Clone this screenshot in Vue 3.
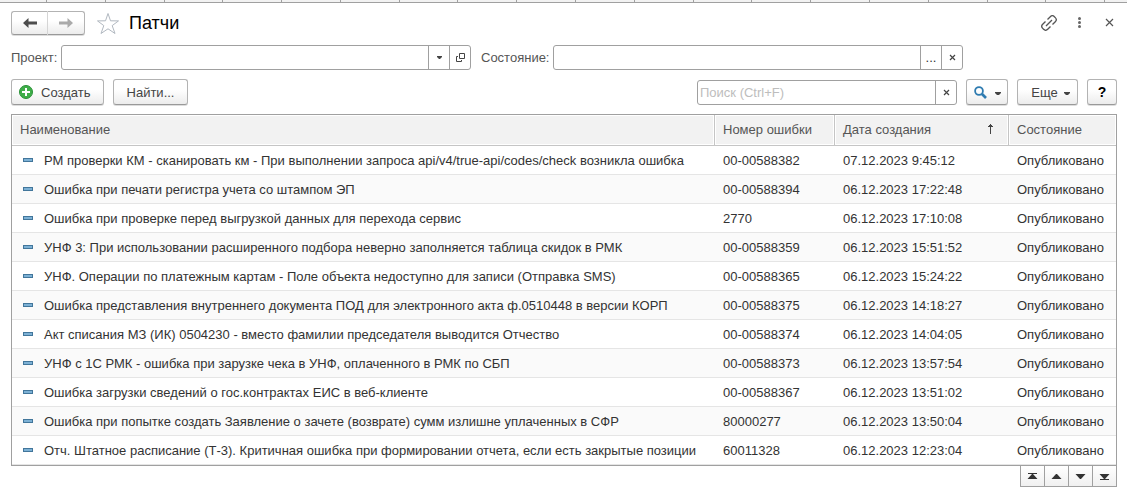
<script setup>
import { ref } from 'vue'

const project = ref('')
const state = ref('')
const query = ref('')
const rows = [
  ['РМ проверки КМ - сканировать км - При выполнении запроса api/v4/true-api/codes/check возникла ошибка', '00-00588382', '07.12.2023 9:45:12'],
  ['Ошибка при печати регистра учета со штампом ЭП', '00-00588394', '06.12.2023 17:22:48'],
  ['Ошибка при проверке перед выгрузкой данных для перехода сервис', '2770', '06.12.2023 17:10:08'],
  ['УНФ 3: При использовании расширенного подбора неверно заполняется таблица скидок в РМК', '00-00588359', '06.12.2023 15:51:52'],
  ['УНФ. Операции по платежным картам - Поле объекта недоступно для записи (Отправка SMS)', '00-00588365', '06.12.2023 15:24:22'],
  ['Ошибка представления внутреннего документа ПОД для электронного акта ф.0510448 в версии КОРП', '00-00588375', '06.12.2023 14:18:27'],
  ['Акт списания МЗ (ИК) 0504230 - вместо фамилии председателя выводится Отчество', '00-00588374', '06.12.2023 14:04:05'],
  ['УНФ с 1С РМК - ошибка при зарузке чека в УНФ, оплаченного в РМК по СБП', '00-00588373', '06.12.2023 13:57:54'],
  ['Ошибка загрузки сведений о гос.контрактах ЕИС в веб-клиенте', '00-00588367', '06.12.2023 13:51:02'],
  ['Ошибка при попытке создать Заявление о зачете (возврате) сумм излишне уплаченных в СФР', '80000277', '06.12.2023 13:50:04'],
  ['Отч. Штатное расписание (Т-3). Критичная ошибка при формировании отчета, если есть закрытые позиции', '60011328', '06.12.2023 12:23:04'],
]
const pager = [
  { label: 'В начало', d: 'M4 5h9v1H4zM8 6h1L13.500 11h-10z' },
  { label: 'Вверх', d: 'M8 6h1L13.500 11h-10z' },
  { label: 'Вниз', d: 'M3.500 6h10L9 11H8z' },
  { label: 'В конец', d: 'M3.500 6h10L9 11H8zM4 11h9v1H4z' },
]
</script>

<template>
  <div class="page">
    <div class="tabs"><i class="first"></i><i v-for="n in 18" :key="n"></i><i class="last"></i></div>
    <main>
      <header class="titlebar">
        <div class="nav">
          <button class="btn" aria-label="Назад">
            <svg width="14" height="10" viewBox="0 0 14 10"><path d="M0 5L5.500 0v3.500H14v3H5.500V10z" fill="#4d4d4d" /></svg>
          </button>
          <button class="btn" aria-label="Вперед">
            <svg width="14" height="10" viewBox="0 0 14 10"><path d="M14 5L8.500 0v3.500H0v3h8.500V10z" fill="#aaa" /></svg>
          </button>
        </div>
        <button class="plain star" aria-label="Избранное">
          <svg width="24" height="23" viewBox="0 0 24 23"><path d="M12 1.500l2.500 7.300 8 .1-6.300 4.700 2.800 7.900-7-4.700-7 4.700 2.800-7.900L1.500 8.900l8-.1z" fill="none" stroke="#b1b8c0" /></svg>
        </button>
        <h1>Патчи</h1>
        <div class="tools">
          <button class="plain" aria-label="Ссылка">
            <svg width="16" height="16" viewBox="0 0 16 16" fill="none" stroke="#555" stroke-width="1.300"><path d="M6.500 4.500L9.300 1.700a2.900 2.900 0 0 1 4.100 0l.9.9a2.900 2.900 0 0 1 0 4.100L11.500 9.500M9.500 11.500l-2.800 2.800a2.900 2.900 0 0 1-4.100 0l-.9-.9a2.900 2.900 0 0 1 0-4.100L4.500 6.500M5 11l6-6" /></svg>
          </button>
          <button class="plain" aria-label="Меню">
            <svg width="16" height="16" viewBox="0 0 16 16" fill="#666"><circle cx="8.500" cy="3.500" r="1.500" /><circle cx="8.500" cy="7.500" r="1.500" /><circle cx="8.500" cy="11.500" r="1.500" /></svg>
          </button>
          <button class="plain" aria-label="Закрыть">
            <svg width="16" height="16" viewBox="0 0 16 16" stroke="#555" stroke-width="1.200"><path d="M5 4l7 7M12 4l-7 7" /></svg>
          </button>
        </div>
      </header>

      <div class="filters">
        <label for="project">Проект:</label>
        <div class="field">
          <input id="project" v-model="project" type="text">
          <button aria-label="Выбрать из списка"><svg width="5" height="3" viewBox="0 0 5 3"><path d="M0 0h5v1L3 3H2L0 1z" fill="#444" /></svg></button>
          <button aria-label="Открыть"><svg width="9" height="9" viewBox="0 0 9 9" fill="none" stroke="#444"><path d="M3.500.5h5v5h-5zM2 3.500H.5v5h5V7" /></svg></button>
        </div>
        <label for="state" class="second">Состояние:</label>
        <div class="field">
          <input id="state" v-model="state" type="text">
          <button aria-label="Выбрать">...</button>
          <button aria-label="Очистить"><svg width="7" height="7" viewBox="0 0 7 7" stroke="#444" stroke-width="1.200"><path d="M1 1l5 5M6 1L1 6" /></svg></button>
        </div>
      </div>

      <div class="commands">
        <button class="btn create">
          <svg width="14" height="14" viewBox="0 0 14 14"><circle cx="7" cy="7" r="6.500" fill="#3fae49" stroke="#2b9138" /><path d="M7 3v8M3 7h8" stroke="#fff" stroke-width="2" /></svg>
          Создать
        </button>
        <button class="btn find">Найти...</button>
        <div class="field search">
          <input v-model="query" type="text" placeholder="Поиск (Ctrl+F)" aria-label="Поиск">
          <button aria-label="Очистить поиск"><svg width="7" height="7" viewBox="0 0 7 7" stroke="#444" stroke-width="1.200"><path d="M1 1l5 5M6 1L1 6" /></svg></button>
        </div>
        <button class="btn lookup" aria-label="Поиск в списке">
          <svg width="13" height="13" viewBox="0 0 13 13" fill="none" stroke="#2e7bb0"><circle cx="5" cy="5" r="3.900" stroke-width="1.800" /><path d="M8 8l4 4" stroke-width="2.600" /></svg>
          <svg class="caret" width="6" height="3" viewBox="0 0 6 3"><path d="M0 0h6v1L4 3H2L0 1z" fill="#444" /></svg>
        </button>
        <button class="btn more">Еще <svg class="caret" width="6" height="3" viewBox="0 0 6 3"><path d="M0 0h6v1L4 3H2L0 1z" fill="#444" /></svg></button>
        <button class="btn help">?</button>
      </div>

      <table>
        <colgroup><col><col class="c-num"><col class="c-date"><col class="c-state"></colgroup>
        <thead>
          <tr>
            <th>Наименование</th>
            <th>Номер ошибки</th>
            <th><div class="sorted">Дата создания<svg width="7" height="10" viewBox="0 0 7 10"><path d="M3 10V3H1V2h1V1h1V0h1v1h1v1h1v1H4v7z" fill="#444" /></svg></div></th>
            <th>Состояние</th>
          </tr>
        </thead>
        <tbody>
          <tr v-for="row in rows" :key="row[0]">
            <td><div class="name"><i class="mark"></i>{{ row[0] }}</div></td>
            <td>{{ row[1] }}</td>
            <td>{{ row[2] }}</td>
            <td>Опубликовано</td>
          </tr>
        </tbody>
      </table>
      <div class="pager">
        <button v-for="p in pager" :key="p.label" :aria-label="p.label">
          <svg width="17" height="16" viewBox="0 0 17 16"><path :d="p.d" fill="#333" /></svg>
        </button>
      </div>
    </main>
  </div>
</template>

<style>
body { margin: 0; background: #fff; }
</style>

<style scoped>
.page, .page button, .page input { font-family: "Liberation Sans", Arial, sans-serif; font-size: 13px; color: #333; }
.page * { box-sizing: border-box; }
button { padding: 0; margin: 0; background: none; border: 0; display: flex; align-items: center; justify-content: center; }
svg { display: block; flex: none; }
.tabs { display: flex; height: 3px; background: #f2f2f2; border-bottom: 1px solid #a0a0a0; }
.tabs i { flex: 1; border-right: 1px solid #a0a0a0; }
.tabs .first { flex: 0 0 47px; }
.tabs .last { flex: 0 0 22px; border: 0; }
main { padding: 8px 10px 4px 11px; }
.page .btn { height: 26px; border: 1px solid #b3b3b3; border-bottom-color: #999; border-radius: 3px; background: linear-gradient(#fff 40%, #ececec); box-shadow: 0 1px 0 #ddd; color: #444; }
.titlebar { display: flex; align-items: center; height: 24px; }
.nav { display: flex; }
.page .nav .btn { width: 37px; height: 24px; }
.page .nav .btn:first-child { border-radius: 3px 0 0 3px; border-right-color: #d5d5d5; }
.page .nav .btn:last-child { border-radius: 0 3px 3px 0; border-left: 0; }
.star { margin-left: 11px; }
h1 { margin: 0 0 0 9px; font-size: 18px; line-height: 24px; font-weight: 400; color: #000; }
.tools { display: flex; gap: 14px; margin-left: auto; }
.filters { display: flex; align-items: center; margin-top: 10px; }
label { width: 50px; color: #555; white-space: nowrap; }
.second { width: 72px; margin-left: 10px; }
.field { display: flex; width: 410px; height: 25px; border: 1px solid #a0a0a0; border-radius: 3px; background: #fff; overflow: hidden; }
.field input { flex: 1; min-width: 0; border: 0; outline: 0; padding: 0 2px; background: none; }
.field input::placeholder { color: #bdbdbd; opacity: 1; }
.field button { width: 21px; border-left: 1px solid #a0a0a0; }
.commands { display: flex; align-items: center; margin: 9px 0; }
.create { width: 93px; gap: 8px; justify-content: flex-start; padding-left: 7px; }
.find { width: 75px; margin-left: 9px; }
.search { width: 260px; margin-left: auto; }
.lookup { width: 42px; margin-left: 9px; gap: 8px; }
.more { width: 61px; margin-left: 9px; gap: 6px; padding-left: 6px; }
.caret { margin-top: 2px; }
.page .help { width: 30px; margin-left: 9px; color: #000; font-size: 14px; font-weight: 700; }
table { width: 100%; table-layout: fixed; border-collapse: separate; border-spacing: 0; border: 1px solid #a0a0a0; }
.c-num { width: 120px; }
.c-date { width: 174px; }
.c-state { width: 107px; }
th { height: 31px; padding: 0 8px 2px; text-align: left; font-weight: 400; color: #555; background: #f2f2f2; border-right: 1px solid #c5c5c5; border-bottom: 1px solid #c5c5c5; box-shadow: inset 0 0 0 1px #fff; }
th:last-child { border-right: 0; }
td { height: 29px; padding: 0 8px; border-bottom: 1px solid #e5e5e5; white-space: nowrap; }
tbody tr:nth-child(even) { background: #fafafa; }
.sorted { display: flex; align-items: center; justify-content: space-between; padding-right: 6px; }
.name { display: flex; align-items: center; }
.mark { flex: none; width: 10px; height: 4px; margin: 0 11px 0 3px; background: #7db1d5; border: 1px solid #42769b; }
.pager { display: flex; justify-content: flex-end; margin-top: -1px; }
.pager button { width: 25px; height: 22px; border: 1px solid #a0a0a0; background: linear-gradient(#fff, #f0f0f0); }
.pager button + button { margin-left: -1px; }
</style>
